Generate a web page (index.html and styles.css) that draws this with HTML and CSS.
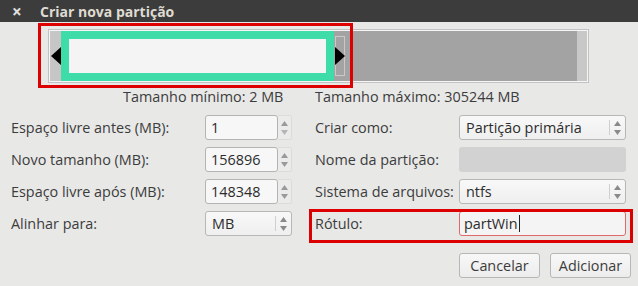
FILE: index.html
```html
<!DOCTYPE html>
<html lang="pt">
<head>
<meta charset="utf-8">
<title>Criar nova partição</title>
<link rel="stylesheet" href="styles.css">
</head>
<body>
<div class="window">
  <div class="titlebar">
    <span class="close">×</span>
    <span class="title">Criar nova partição</span>
  </div>
  <div class="content">
    <div class="bar">
      <div class="seg handle-l"></div>
      <div class="seg used"><div class="used-inner"></div></div>
      <div class="seg free"><div class="grip"></div></div>
      <div class="seg handle-r"></div>
      <svg class="arrow arrow-l" width="10" height="18" viewBox="0 0 10 18"><polygon points="10,0 10,18 0,9" fill="#000"/></svg>
      <svg class="arrow arrow-r" width="10" height="18" viewBox="0 0 10 18"><polygon points="0,0 0,18 10,9" fill="#000"/></svg>
    </div>
    <div class="limits">
      <span class="lim-min">Tamanho mínimo: 2 MB</span>
      <span class="lim-max">Tamanho máximo: 305244 MB</span>
    </div>
    <div class="form">
      <label class="lbl">Espaço livre antes (MB):</label>
      <div class="spin"><span class="spin-entry">1</span><span class="spin-btns"><svg width="7" height="16" viewBox="0 0 7 16"><polygon points="3.5,1 7,6 0,6" fill="#9a9a9a"/><polygon points="0,10 7,10 3.5,15" fill="#b5b5b5"/></svg></span></div>
      <label class="lbl right">Criar como:</label>
      <div class="combo"><span class="combo-text">Partição primária</span><span class="combo-sep"></span><span class="combo-arrows"><svg width="7" height="16" viewBox="0 0 7 16"><polygon points="3.5,1 7,6 0,6" fill="#8a8a8a"/><polygon points="0,10 7,10 3.5,15" fill="#8a8a8a"/></svg></span></div>

      <label class="lbl">Novo tamanho (MB):</label>
      <div class="spin"><span class="spin-entry">156896</span><span class="spin-btns"><svg width="7" height="16" viewBox="0 0 7 16"><polygon points="3.5,1 7,6 0,6" fill="#9a9a9a"/><polygon points="0,10 7,10 3.5,15" fill="#9a9a9a"/></svg></span></div>
      <label class="lbl right">Nome da partição:</label>
      <div class="entry disabled"></div>

      <label class="lbl">Espaço livre após (MB):</label>
      <div class="spin"><span class="spin-entry">148348</span><span class="spin-btns"><svg width="7" height="16" viewBox="0 0 7 16"><polygon points="3.5,1 7,6 0,6" fill="#9a9a9a"/><polygon points="0,10 7,10 3.5,15" fill="#9a9a9a"/></svg></span></div>
      <label class="lbl right">Sistema de arquivos:</label>
      <div class="combo"><span class="combo-text">ntfs</span><span class="combo-sep"></span><span class="combo-arrows"><svg width="7" height="16" viewBox="0 0 7 16"><polygon points="3.5,1 7,6 0,6" fill="#8a8a8a"/><polygon points="0,10 7,10 3.5,15" fill="#8a8a8a"/></svg></span></div>

      <label class="lbl">Alinhar para:</label>
      <div class="combo"><span class="combo-text">MB</span><span class="combo-sep"></span><span class="combo-arrows"><svg width="7" height="16" viewBox="0 0 7 16"><polygon points="3.5,1 7,6 0,6" fill="#8a8a8a"/><polygon points="0,10 7,10 3.5,15" fill="#8a8a8a"/></svg></span></div>
      <label class="lbl right">Rótulo:</label>
      <div class="entry focused"><span class="entry-text">partWin</span><span class="caret"></span></div>
    </div>
    <div class="actions">
      <button class="btn">Cancelar</button>
      <button class="btn">Adicionar</button>
    </div>
  </div>
  <div class="mark mark-bar"></div>
  <div class="mark mark-label"></div>
</div>
</body>
</html>
```
FILE: styles.css
```css
* { box-sizing: border-box; }
html, body { margin: 0; padding: 0; }
body {
  width: 638px;
  height: 286px;
  overflow: hidden;
  background: #e8e8e7;
  font-family: "Open Sans", "DejaVu Sans", sans-serif;
  font-size: 14.4px;
  color: #3c3c3c;
}
.window { position: relative; width: 638px; height: 286px; }
.titlebar {
  height: 22px;
  background: #3c3c3c;
  color: #dfdbd2;
  display: flex;
  align-items: center;
  font-weight: bold;
  font-size: 14px;
}
.close { width: 40px; padding-left: 12px; font-size: 17px; color: #e0e0e0; }

.content { padding: 7px 0 0 48px; }
.bar {
  position: relative;
  width: 541px;
  height: 54px;
  border: 1px solid #c2c2c2;
  background: #f6f6f6;
  padding: 1px;
  display: flex;
}
.seg { height: 100%; }
.handle-l { width: 11px; background: #c6c6c6; }
.used { width: 273px; background: #3ddca9; padding: 8px; }
.used-inner { width: 100%; height: 100%; background: #f4f4f4; }
.free { flex: 1; background: #a3a3a3; position: relative; }
.grip {
  position: absolute;
  left: 1px; top: 5px;
  width: 10px; height: 40px;
  border: 1px solid #c9c9c9;
}
.handle-r { width: 10px; background: #c8c8c8; }
.arrow { position: absolute; top: 17px; }
.arrow-l { left: 2px; }
.arrow-r { left: 286px; }

.limits {
  display: flex;
  height: 21px;
  align-items: center;
  margin-left: -48px;
  padding-top: 5px;
}
.lim-min { margin-left: 123px; width: 192px; }

.form {
  margin-left: -37px;
  margin-top: 11px;
  display: grid;
  grid-template-columns: 194px 87px 167px 167px;
  grid-auto-rows: 25px;
  row-gap: 7px;
}
.lbl { display: flex; align-items: center; }
.lbl.right { padding-left: 23px; }

.spin {
  display: flex;
  border-radius: 3px;
}
.spin-entry {
  width: 73px;
  background: #f7f7f7;
  border: 1px solid #b4b4b2;
  border-radius: 3px;
  display: flex;
  align-items: center;
  padding-left: 5px;
  color: #2c2c2c;
}
.spin-btns {
  flex: 1;
  display: flex;
  align-items: center;
  justify-content: center;
  background: #ebebea;
  border: 1px solid #dcdcdb;
  border-left: none;
  border-radius: 0 3px 3px 0;
}
.combo {
  display: flex;
  align-items: center;
  background: linear-gradient(#f8f8f8, #efefef);
  border: 1px solid #b7b7b5;
  border-radius: 3px;
  color: #2c2c2c;
}
.combo-text { flex: 1; padding-left: 6px; }
.combo-sep { width: 1px; height: 15px; background: #cfcfcf; }
.combo-arrows { width: 15px; display: flex; justify-content: center; align-items: center; }

.entry {
  border-radius: 3px;
  display: flex;
  align-items: center;
}
.entry.disabled { background: #d2d2d2; }
.entry.focused {
  background: #f4f4f4;
  border: 1px solid #df6a6a;
  padding-left: 4px;
  color: #2c2c2c;
}
.caret { width: 1px; height: 17px; background: #222; margin-left: 1px; }

.actions {
  display: flex;
  justify-content: flex-end;
  gap: 10px;
  padding-right: 7px;
  margin-top: 17px;
}
.btn {
  width: 81px;
  height: 25px;
  font: inherit;
  color: #3c3c3c;
  background: linear-gradient(#f8f8f8, #ececec);
  border: 1px solid #b7b7b5;
  border-radius: 3px;
  padding: 0;
}

.mark { position: absolute; border: 3px solid #dd0000; }
.mark-bar { left: 38px; top: 23px; width: 315px; height: 65px; }
.mark-label { left: 309px; top: 209px; width: 324px; height: 34px; }
```
